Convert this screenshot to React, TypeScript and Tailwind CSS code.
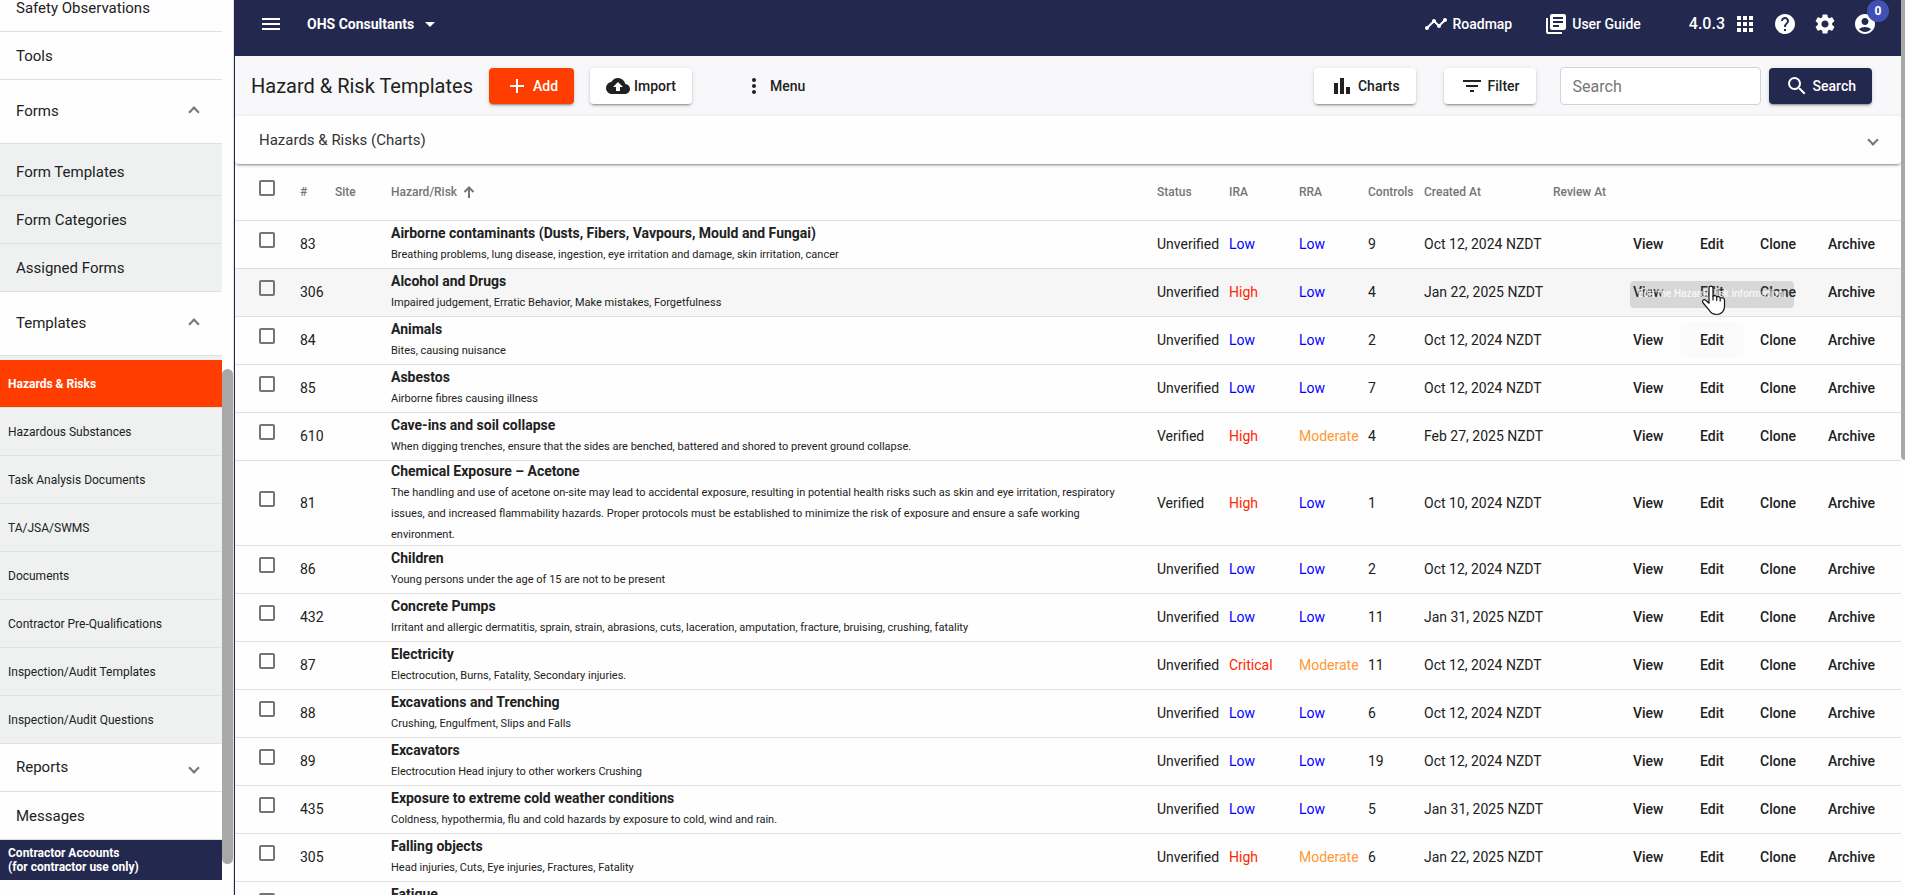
import React from "react";
import {
  MdAccountCircle,
  MdAdd,
  MdApps,
  MdArrowDropDown,
  MdBackup,
  MdBarChart,
  MdFilterList,
  MdHelp,
  MdLibraryBooks,
  MdMenu,
  MdMoreVert,
  MdSearch,
  MdSettings,
  MdTimeline,
} from "react-icons/md";

type Rating = "Low" | "Moderate" | "High" | "Critical";

interface HazardRow {
  id: number;
  title: string;
  description: string;
  status: "Verified" | "Unverified";
  ira: Rating;
  rra: Rating;
  controls: number;
  createdAt: string;
}

const ratingColor: Record<Rating, string> = {
  Low: "text-[#0000ff]",
  Moderate: "text-[#ff9933]",
  High: "text-[#ff2600]",
  Critical: "text-[#ff2600]",
};

const hazards: HazardRow[] = [
  { id: 83, title: "Airborne contaminants (Dusts, Fibers, Vavpours, Mould and Fungai)", description: "Breathing problems, lung disease, ingestion, eye irritation and damage, skin irritation, cancer", status: "Unverified", ira: "Low", rra: "Low", controls: 9, createdAt: "Oct 12, 2024 NZDT" },
  { id: 306, title: "Alcohol and Drugs", description: "Impaired judgement, Erratic Behavior, Make mistakes, Forgetfulness", status: "Unverified", ira: "High", rra: "Low", controls: 4, createdAt: "Jan 22, 2025 NZDT" },
  { id: 84, title: "Animals", description: "Bites, causing nuisance", status: "Unverified", ira: "Low", rra: "Low", controls: 2, createdAt: "Oct 12, 2024 NZDT" },
  { id: 85, title: "Asbestos", description: "Airborne fibres causing illness", status: "Unverified", ira: "Low", rra: "Low", controls: 7, createdAt: "Oct 12, 2024 NZDT" },
  { id: 610, title: "Cave-ins and soil collapse", description: "When digging trenches, ensure that the sides are benched, battered and shored to prevent ground collapse.", status: "Verified", ira: "High", rra: "Moderate", controls: 4, createdAt: "Feb 27, 2025 NZDT" },
  { id: 81, title: "Chemical Exposure – Acetone", description: "The handling and use of acetone on-site may lead to accidental exposure, resulting in potential health risks such as skin and eye irritation, respiratory issues, and increased flammability hazards. Proper protocols must be established to minimize the risk of exposure and ensure a safe working environment.", status: "Verified", ira: "High", rra: "Low", controls: 1, createdAt: "Oct 10, 2024 NZDT" },
  { id: 86, title: "Children", description: "Young persons under the age of 15 are not to be present", status: "Unverified", ira: "Low", rra: "Low", controls: 2, createdAt: "Oct 12, 2024 NZDT" },
  { id: 432, title: "Concrete Pumps", description: "Irritant and allergic dermatitis, sprain, strain, abrasions, cuts, laceration, amputation, fracture, bruising, crushing, fatality", status: "Unverified", ira: "Low", rra: "Low", controls: 11, createdAt: "Jan 31, 2025 NZDT" },
  { id: 87, title: "Electricity", description: "Electrocution, Burns, Fatality, Secondary injuries.", status: "Unverified", ira: "Critical", rra: "Moderate", controls: 11, createdAt: "Oct 12, 2024 NZDT" },
  { id: 88, title: "Excavations and Trenching", description: "Crushing, Engulfment, Slips and Falls", status: "Unverified", ira: "Low", rra: "Low", controls: 6, createdAt: "Oct 12, 2024 NZDT" },
  { id: 89, title: "Excavators", description: "Electrocution Head injury to other workers Crushing", status: "Unverified", ira: "Low", rra: "Low", controls: 19, createdAt: "Oct 12, 2024 NZDT" },
  { id: 435, title: "Exposure to extreme cold weather conditions", description: "Coldness, hypothermia, flu and cold hazards by exposure to cold, wind and rain.", status: "Unverified", ira: "Low", rra: "Low", controls: 5, createdAt: "Jan 31, 2025 NZDT" },
  { id: 305, title: "Falling objects", description: "Head injuries, Cuts, Eye injuries, Fractures, Fatality", status: "Unverified", ira: "High", rra: "Moderate", controls: 6, createdAt: "Jan 22, 2025 NZDT" },
  { id: 90, title: "Fatigue", description: "Loss of concentration, slow reactions", status: "Unverified", ira: "Low", rra: "Low", controls: 6, createdAt: "Oct 12, 2024 NZDT" },
];

const formLinks = ["Form Templates", "Form Categories", "Assigned Forms"];

const templateLinks = [
  "Hazardous Substances",
  "Task Analysis Documents",
  "TA/JSA/SWMS",
  "Documents",
  "Contractor Pre-Qualifications",
  "Inspection/Audit Templates",
  "Inspection/Audit Questions",
];

const SHADOW =
  "shadow-[0_3px_1px_-2px_rgba(0,0,0,.2),0_2px_2px_rgba(0,0,0,.14),0_1px_5px_rgba(0,0,0,.12)]";

const raisedButton = `flex h-9 items-center rounded text-sm font-medium ${SHADOW}`;

const Chevron: React.FC<{ open?: boolean }> = ({ open }) => (
  <span
    className={`size-2 border-r-2 border-b-2 border-[#757575] ${open ? "-rotate-135" : "rotate-45"}`}
  />
);

const SideLink: React.FC<{ label: string }> = ({ label }) => (
  <a href="#" className="flex h-12 items-center border-b border-[#e0e0e0] px-4 pt-0.5">
    {label}
  </a>
);

const Sidebar: React.FC = () => (
  <aside className="flex h-full w-[235px] shrink-0 border-r border-[#23284e] bg-[#fefefe]">
    <nav className="-mt-4 flex w-[222px] flex-col text-[15px] text-[#212121]">
      <SideLink label="Safety Observations" />
      <SideLink label="Tools" />

      <button type="button" className="flex h-16 shrink-0 items-center justify-between border-b border-[#e0e0e0] pr-6 pl-4">
        Forms
        <Chevron open />
      </button>
      <div className="rounded-br bg-[#eff1f1] pt-1">
        {formLinks.map((label) => (
          <SideLink key={label} label={label} />
        ))}
      </div>

      <button type="button" className="flex h-16 shrink-0 items-center justify-between border-b border-[#e0e0e0] pr-6 pl-4">
        Templates
        <Chevron open />
      </button>
      <div className="bg-[#eff1f1] pt-1 text-xs">
        <a href="#" className="flex h-12 items-center border-b border-[#e0e0e0] bg-[#ff3d00] px-2 font-bold text-white">
          Hazards &amp; Risks
        </a>
        {templateLinks.map((label) => (
          <a key={label} href="#" className="flex h-12 items-center border-b border-[#e0e0e0] px-2">
            {label}
          </a>
        ))}
      </div>

      <button type="button" className="flex h-12 shrink-0 items-center justify-between border-b border-[#e0e0e0] pr-6 pl-4">
        Reports
        <Chevron />
      </button>
      <SideLink label="Messages" />
      <a href="#" className="flex h-10 shrink-0 items-center bg-[#23284e] px-2 text-xs leading-[14px] font-bold text-white">
        Contractor Accounts
        <br />
        (for contractor use only)
      </a>
    </nav>
    <div className="flex-1 border-r border-[#e0e0e0] pt-[369px]">
      <div className="h-[495px] rounded-full bg-[#a8a8a8]" />
    </div>
  </aside>
);

const TopBar: React.FC = () => (
  <header className="flex h-14 shrink-0 items-center bg-[#23284e] pr-6 pb-2 pl-6 text-sm font-medium text-white">
    <button type="button" aria-label="Toggle menu">
      <MdMenu className="size-6" />
    </button>
    <button type="button" className="ml-6 flex items-center gap-1 font-bold">
      OHS Consultants
      <MdArrowDropDown className="size-6" />
    </button>
    <a href="#" className="ml-auto flex items-center gap-1">
      <MdTimeline className="size-6" />
      Roadmap
    </a>
    <a href="#" className="ml-8 flex items-center gap-1">
      <MdLibraryBooks className="size-6" />
      User Guide
    </a>
    <span className="ml-12 text-base">4.0.3</span>
    <div className="ml-2 flex gap-4">
      <button type="button" aria-label="Apps">
        <MdApps className="size-6" />
      </button>
      <button type="button" aria-label="Help">
        <MdHelp className="size-6" />
      </button>
      <button type="button" aria-label="Settings">
        <MdSettings className="size-6" />
      </button>
      <button type="button" aria-label="Account" className="relative">
        <MdAccountCircle className="size-6" />
        <span className="absolute -top-3 -right-3 flex size-[22px] items-center justify-center rounded-full bg-[#3f51b5] text-xs font-bold">
          0
        </span>
      </button>
    </div>
  </header>
);

const Toolbar: React.FC = () => (
  <div className="flex h-[60px] shrink-0 items-center bg-[#f8f8fa] pr-[29px] pl-4 text-[#212121]">
    <h1 className="text-xl">Hazard &amp; Risk Templates</h1>
    <button type="button" className={`${raisedButton} ml-4 gap-1 bg-[#ff3d00] px-4 text-white`}>
      <MdAdd className="size-6" />
      Add
    </button>
    <button type="button" className={`${raisedButton} ml-4 gap-1 bg-white px-4`}>
      <MdBackup className="size-6" />
      Import
    </button>
    <button type="button" className="ml-[50px] flex h-9 items-center gap-1 text-sm font-medium">
      <MdMoreVert className="size-6" />
      Menu
    </button>
    <button type="button" className={`${raisedButton} ml-auto gap-1 bg-white px-4`}>
      <MdBarChart className="size-6" />
      Charts
    </button>
    <button type="button" className={`${raisedButton} ml-7 gap-1 bg-white px-4`}>
      <MdFilterList className="size-6" />
      Filter
    </button>
    <input
      type="text"
      aria-label="Search"
      placeholder="Search"
      className="ml-6 h-[38px] w-[201px] rounded border border-[#ced4da] bg-white px-3 text-base placeholder:text-[#757575]"
    />
    <button type="button" className={`${raisedButton} ml-2 gap-1 bg-[#23284e] px-4 text-white`}>
      <MdSearch className="size-6" />
      Search
    </button>
  </div>
);

const CheckBox: React.FC<{ label: string }> = ({ label }) => (
  <input
    type="checkbox"
    aria-label={label}
    className="mb-2 block size-4 appearance-none rounded-xs border-2 border-[#757575]"
  />
);

const SortArrow: React.FC = () => (
  <svg viewBox="0 0 16 16" className="size-4" fill="none" stroke="currentColor" strokeWidth="2" aria-hidden="true">
    <path d="M8 14V4M3.500 8 8 3.500 12.500 8" />
  </svg>
);

// Pointer and fading tooltip for the hovered row action
const EditTooltip: React.FC = () => (
  <div className="pointer-events-none absolute top-3 -left-[3px] z-10">
    <span
      role="tooltip"
      className="flex h-[27px] w-[164px] items-center justify-center rounded bg-[#616161]/20 text-[10px] font-medium whitespace-nowrap text-white/80"
    >
      Edit the Hazard/Risk information.
    </span>
    <svg viewBox="0 0 25 31" className="absolute top-1 left-[71px] h-[31px] w-[25px]" aria-hidden="true">
      <path
        d="M8 3c0-2.600 4-2.600 4 0v8.500c.6-1.400 3.400-1.200 3.700.7.900-1.100 3.300-.7 3.500 1 1-.9 4.300-.4 4.300 1.700v6.600c0 4.500-3 8-7.800 8-4 0-6.500-2-8.200-5.200L1.800 17.500c-1.200-2.300 1.400-3.800 3-2.200L8 18.200z"
        fill="#fff"
        stroke="#111"
        strokeWidth="1.200"
        strokeLinejoin="round"
      />
      <path d="M12 11.500v3.500M15.700 12.500v3M19.200 13.500v2.500" stroke="#111" strokeWidth="1.200" strokeLinecap="round" />
    </svg>
  </div>
);

const actions = ["View", "Edit", "Clone", "Archive"];

const HazardTable: React.FC = () => (
  <table className="w-full table-fixed text-left text-sm text-[#212121]">
    <colgroup>
      <col className="w-[65px]" />
      <col className="w-[35px]" />
      <col className="w-14" />
      <col />
      <col className="w-[72px]" />
      <col className="w-[70px]" />
      <col className="w-[69px]" />
      <col className="w-14" />
      <col className="w-[129px]" />
      <col className="w-20" />
      <col className="w-[67px]" />
      <col className="w-[60px]" />
      <col className="w-[68px]" />
      <col className="w-[73px]" />
    </colgroup>
    <thead>
      <tr className="h-14 border-b border-[#e0e0e0] text-xs text-[#757575] [&>th]:font-medium">
        <th className="pl-6">
          <CheckBox label="Select all" />
        </th>
        <th>#</th>
        <th>Site</th>
        <th>
          <span className="flex items-center gap-1">
            Hazard/Risk
            <SortArrow />
          </span>
        </th>
        <th>Status</th>
        <th>IRA</th>
        <th>RRA</th>
        <th>Controls</th>
        <th>Created At</th>
        <th>Review At</th>
        <th colSpan={4} aria-label="Actions" />
      </tr>
    </thead>
    <tbody>
      {hazards.map((row) => {
        const hovered = row.id === 306;
        // The Edit button below still shows the end of its hover fade
        const fading = row.id === 84;

        return (
          <tr key={row.id} className={`h-12 border-b border-[#e0e0e0] ${hovered ? "bg-[#f6f6f6]" : ""}`}>
            <td className="pl-6">
              <CheckBox label={`Select ${row.title}`} />
            </td>
            <td>{row.id}</td>
            <td />
            <td className="pr-6">
              <div className="leading-[21px] font-bold">{row.title}</div>
              <div className="text-[11px] leading-[21px]">{row.description}</div>
            </td>
            <td>{row.status}</td>
            <td className={ratingColor[row.ira]}>{row.ira}</td>
            <td className={ratingColor[row.rra]}>{row.rra}</td>
            <td>{row.controls}</td>
            <td>{row.createdAt}</td>
            <td />
            {actions.map((action) => (
              <td key={action} className="relative">
                <button
                  type="button"
                  className={`font-medium ${fading && action === "Edit" ? "-ml-5 h-9 rounded bg-[#fbfbfb] px-5" : ""}`}
                >
                  {action}
                </button>
                {hovered && action === "View" && <EditTooltip />}
              </td>
            ))}
          </tr>
        );
      })}
    </tbody>
  </table>
);

export default function App() {
  return (
    <div className="flex h-screen overflow-hidden bg-[#fefefe] font-[Roboto,sans-serif]">
      <Sidebar />
      <div className="flex min-w-0 flex-1">
        <main className="flex min-w-0 flex-1 flex-col overflow-hidden">
          <TopBar />
          <Toolbar />
          <button
            type="button"
            className={`relative flex h-12 shrink-0 items-center justify-between rounded bg-[#fefefe] pr-6 pl-6 text-[15px] text-[#333] ${SHADOW}`}
          >
            Hazards &amp; Risks (Charts)
            <Chevron />
          </button>
          <HazardTable />
        </main>
        <div className="w-1 shrink-0">
          <div className="h-[460px] rounded-bl bg-[#a8a8a8]" />
        </div>
      </div>
    </div>
  );
}
